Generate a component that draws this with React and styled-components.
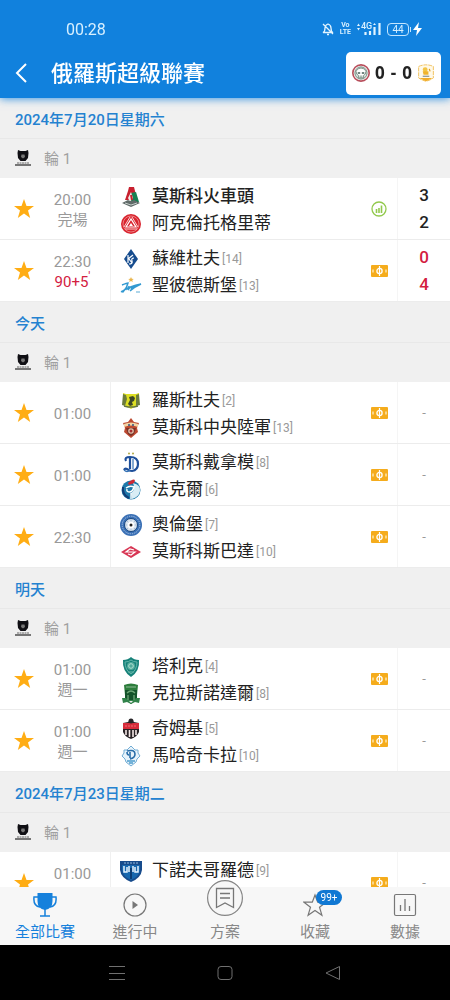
import React from 'react';
import styled, { createGlobalStyle } from 'styled-components';

const sections = [
  {
    title: '2024年7月20日星期六',
    matches: [
      {
        time: '20:00',
        status: '完場',
        home: { name: '莫斯科火車頭', crest: 'lokomotiv', winner: true },
        away: { name: '阿克倫托格里蒂', crest: 'akron' },
        score: [3, 2],
        finished: true,
      },
      {
        time: '22:30',
        minute: '90+5',
        home: { name: '蘇維杜夫', rank: 14, crest: 'krylia' },
        away: { name: '聖彼德斯堡', rank: 13, crest: 'zenit' },
        score: [0, 4],
      },
    ],
  },
  {
    title: '今天',
    matches: [
      {
        time: '01:00',
        home: { name: '羅斯杜夫', rank: 2, crest: 'rostov' },
        away: { name: '莫斯科中央陸軍', rank: 13, crest: 'cska' },
      },
      {
        time: '01:00',
        home: { name: '莫斯科戴拿模', rank: 8, crest: 'dynamo' },
        away: { name: '法克爾', rank: 6, crest: 'fakel' },
      },
      {
        time: '22:30',
        home: { name: '奧倫堡', rank: 7, crest: 'orenburg' },
        away: { name: '莫斯科斯巴達', rank: 10, crest: 'spartak' },
      },
    ],
  },
  {
    title: '明天',
    matches: [
      {
        time: '01:00',
        status: '週一',
        home: { name: '塔利克', rank: 4, crest: 'akhmat' },
        away: { name: '克拉斯諾達爾', rank: 8, crest: 'krasnodar' },
      },
      {
        time: '01:00',
        status: '週一',
        home: { name: '奇姆基', rank: 5, crest: 'khimki' },
        away: { name: '馬哈奇卡拉', rank: 10, crest: 'makhachkala' },
      },
    ],
  },
  {
    title: '2024年7月23日星期二',
    matches: [
      {
        time: '01:00',
        status: '\u00a0',
        home: { name: '下諾夫哥羅德', rank: 9, crest: 'nizhny' },
        away: { name: '', crest: 'rubin' },
      },
    ],
  },
];

const crests = {
  lokomotiv: (
    <>
      <path d="M9 1h5l1 4 2 9H5l3-9z" fill="#c8202f" />
      <path d="M11 7l5-1 3 10-8 3z" fill="#168052" />
      <path d="M8 12l3-6 2 6-3 4z" fill="#f3e8e5" />
      <path d="M11 9l1 5" stroke="#c8202f" strokeWidth="2" />
      <path d="M2 17l6-3q3 2 6 0l6 3-9 4z" fill="#606b69" />
      <path d="M5 17l6 2 6-2" stroke="#c7cecb" fill="none" />
    </>
  ),
  akron: (
    <>
      <circle cx="11" cy="11" r="10" fill="#d9242f" />
      <circle cx="11" cy="11" r="8" fill="none" stroke="#ee7f80" />
      <path d="M10 4L4 14M12 4l6 10M5 16h12" stroke="#f9cfcf" strokeWidth="1" />
      <path d="M11 6l-5 8h10z" fill="none" stroke="#fff" strokeWidth="1.2" />
      <path d="M11 10l-2 3h4z" fill="#fff" />
    </>
  ),
  krylia: (
    <>
      <path d="M11 1l7 10-7 10-7-10z" fill="#164c8e" />
      <path d="M8 7v8M8 11l5-4M9 11l3 4M14 10q-3 0-2 3t-3 3" stroke="#fff" strokeWidth="1.2" fill="none" />
    </>
  ),
  zenit: (
    <>
      <path d="M11 2l.8 1.700 2 .2-1.500 1.200.4 2L11 6.100l-1.700 1 .4-2-1.500-1.200 2-.2z" fill="#e9b44b" />
      <path d="M2 10q5-2 6-2-1 5-5 9l-2-.5M1 17q9-6 20-8-7 3-11 7M7 11l-1 4M9 11l-1 4q3-4 4-3l-1 3q3-4 4-3M14 12l2-2" stroke="#3299d1" strokeWidth="1.400" fill="none" />
      <path d="M16 17h4" stroke="#81bfdf" strokeWidth="1.300" />
    </>
  ),
  rostov: (
    <>
      <path d="M3 3l3 1h10l3-1v11l-3 2-5 3-5-3-3-2z" fill="#dddf22" />
      <path d="M3 4l3 1 1 4-2 7-3-1zM16 5l3-1 1 11-4 1z" fill="#6c7c3c" />
      <path d="M9 7l4-1 2 2-1 3-2 1 1 3-3 1-2-2 2-4z" fill="#3d4726" />
      <path d="M4 16l4 1h6l4-1" stroke="#63743e" strokeWidth="1.300" fill="none" />
    </>
  ),
  cska: (
    <>
      <path d="M11 1l3 4 5 1-2 5 1 4-7 6-7-6 1-4-2-5 5-1z" fill="#bc4a31" />
      <path d="M4 7q7-3 14 0v3q-7-3-14 0z" fill="#f1d4a4" />
      <path d="M6 11h10l-2 6-3 2-3-2z" fill="#7a3328" />
      <circle cx="11" cy="14" r="2.800" fill="#dfc4ab" />
      <circle cx="11" cy="14" r="1.500" fill="#a82d30" />
      <path d="M8 8h2M12 8h2" stroke="#315381" strokeWidth="1.400" />
    </>
  ),
  dynamo: (
    <>
      <circle cx="9" cy="1.500" r="1" fill="#b1a944" />
      <circle cx="13" cy="1.500" r="1" fill="#b1a944" />
      <path d="M6 9q-2-4 4-4 8 0 8 7 0 6-6 7-3 0-5-2-2-1-3 1M10 6v11" fill="none" stroke="#1e4f9a" strokeWidth="2.200" />
      <path d="M13 7v10M4 18q3 3 6 0" stroke="#3572b5" strokeWidth="1.200" fill="none" />
    </>
  ),
  fakel: (
    <>
      <circle cx="11" cy="11" r="9.500" fill="#1d79aa" />
      <path d="M13 4q8 2 7 8-1 6-8 8l-1-6q5-3 2-10z" fill="#d9edf5" />
      <path d="M8 4q5-5 7-3l-1 3-5 2z" fill="#cf2834" />
      <path d="M6 9q4-3 8-1-1 4-4 5-4 0-3-3M11 14v6" stroke="#fff" strokeWidth="1.400" fill="none" />
      <path d="M3 8q-1 8 6 11" stroke="#113e77" strokeWidth="2" fill="none" />
    </>
  ),
  orenburg: (
    <>
      <circle cx="11" cy="11" r="11" fill="#3a70b5" />
      <circle cx="11" cy="11" r="8.800" fill="none" stroke="#a9c3e4" strokeDasharray="1.300 1" />
      <circle cx="11" cy="11" r="6.500" fill="#dce6f0" stroke="#16457e" />
      <path d="M11 5v12M5 11h12M7 7l8 8M15 7l-8 8" stroke="#a9bfd8" />
      <circle cx="11" cy="11" r="3.500" fill="#fff" />
      <circle cx="11" cy="11" r="1.500" fill="#222" />
    </>
  ),
  spartak: (
    <>
      <path d="M1 11l10-6 10 6-10 6z" fill="#d83654" />
      <path d="M14 9l-4-1-4 3h9l-4 3-3-1" fill="none" stroke="#fff" strokeWidth="1.200" />
    </>
  ),
  akhmat: (
    <>
      <path d="M3 4q5 0 8-3 3 3 8 3 1 11-8 17Q2 15 3 4z" fill="#168179" />
      <path d="M5 6q4 0 6-2 2 2 6 2 0 8-6 12Q5 14 5 6z" fill="none" stroke="#63b6a9" />
      <circle cx="11" cy="10" r="4" fill="#51aa9b" />
      <circle cx="11" cy="10" r="2.300" fill="none" stroke="#b0dfd1" />
      <path d="M8 16h6" stroke="#6bb7aa" />
    </>
  ),
  krasnodar: (
    <>
      <path d="M4 2q7-3 14 0l-1 10H5z" fill="#2d7d3c" />
      <path d="M5 7h12v9l-6 5-6-5z" fill="#14532b" />
      <path d="M2 15h4l2 2h6l2-2h4l-1 5-4-1-4 2-4-2-4 1z" fill="#31834a" />
      <path d="M7 10q4-4 8 0M8 12v5M14 12v5M6 4h10" stroke="#6fa778" strokeWidth="1.300" fill="none" />
      <path d="M9 18l2 2 2-2z" fill="#eee" />
    </>
  ),
  khimki: (
    <>
      <path d="M3 5l5-1 3-3 3 3 5 1v9q-2 5-8 7-6-2-8-7z" fill="#292326" />
      <path d="M3 5h16v6H3z" fill="#d72c3b" />
      <path d="M5 8h12" stroke="#f06e73" strokeDasharray="2 1" />
      <path d="M6 12v5M9.500 12v7M13 12v7M16 12v5" stroke="#f5e9e8" strokeWidth="1.600" />
      <circle cx="11" cy="3" r="2.500" fill="#282528" />
    </>
  ),
  makhachkala: (
    <>
      <path d="M11 1l4 4h3v3l2 3-3 3-1 3-5 4-5-4-1-3-3-3 2-3V5h3z" fill="#e7f3fb" stroke="#72add5" />
      <path d="M7 6q8-2 8 3 0 4-5 5M10 7v6M7 7q0 3 2 3" fill="none" stroke="#286da9" strokeWidth="1.600" />
      <path d="M7 16h8M9 18h4" stroke="#4e9dcd" strokeWidth="1.600" />
    </>
  ),
  nizhny: (
    <>
      <path d="M0 1h22v9q-1 8-11 12Q1 18 0 10z" fill="#174b8c" />
      <path d="M2 5h18v5q-1 7-9 10-8-3-9-10z" fill="#1767ae" />
      <path d="M4 6v6h3V7M9 6v6M13 6v6M15 7v5h3V6" fill="none" stroke="#e6f3ff" strokeWidth="1.500" />
      <path d="M4 3h14" stroke="#91b8da" strokeDasharray="2 1" />
      <path d="M11 8v11" stroke="#082e61" strokeWidth="1.500" />
    </>
  ),
  rubin: (
    <>
      <path d="M1 0h20v1H1z" fill="#8b6a70" />
      <path d="M2 2h18l-3 13-6 6-6-6z" fill="#8c1d34" />
    </>
  ),
  bull: (
    <>
      <circle cx="11" cy="11" r="10" fill="#fff" stroke="#b84f5c" strokeWidth="2" />
      <circle cx="11" cy="11" r="7.500" fill="#d5e0d9" stroke="#59756a" />
      <path d="M5 9q1-4 6-4t6 4q0 4-3 5v3H8v-3q-3-1-3-5z" fill="#fff" stroke="#6d877c" />
      <path d="M7 10h3v2H7zM12 10h3v2h-3z" fill="#435e57" />
      <path d="M10 14v3M12 14v3" stroke="#6d877c" />
    </>
  ),
  gold: (
    <>
      <path d="M2 3q9-4 18 0v14q-4 3-9 4-5-1-9-4z" fill="#fff9e8" stroke="#eeb743" strokeDasharray="5 1" />
      <circle cx="10" cy="7" r="3" fill="#f2c443" />
      <path d="M7 9h7v4H8z" fill="#f0b32c" />
      <path d="M15 6l1 3" stroke="#df9f23" strokeWidth="1.500" />
      <path d="M7 15h8" stroke="#8d918c" strokeWidth="1.500" />
      <path d="M3 17h16l-8 4z" fill="#f2ac27" />
    </>
  ),
};

const Crest = ({ name, size = 22 }) => (
  <Svg width={size} height={size} viewBox="0 0 22 22" aria-hidden="true">
    {crests[name]}
  </Svg>
);

const StarIcon = () => (
  <Svg width="20" height="20" viewBox="0 0 20 20" aria-hidden="true">
    <path d="M10 0l2.500 7H20l-6 4.500 2.200 7.500L10 14.600 3.800 19 6 11.500 0 7h7.500z" fill="#ffad14" />
  </Svg>
);

const PitchIcon = () => (
  <Svg width="17" height="12" viewBox="0 0 17 12" aria-hidden="true">
    <rect width="17" height="12" rx="1" fill="#f5ac1c" />
    <circle cx="8.500" cy="6" r="2.600" fill="none" stroke="#fff" strokeWidth="1.300" />
    <path d="M8.500 1v10" stroke="#fff" strokeWidth="1.200" />
    <path d="M2 4.500v3M15 4.500v3" stroke="#fff3d2" strokeWidth="1.200" />
  </Svg>
);

const StatsIcon = () => (
  <Svg width="16" height="16" viewBox="0 0 16 16" aria-hidden="true">
    <circle cx="8" cy="8" r="7" fill="none" stroke="#92c94d" strokeWidth="1.300" />
    <path d="M5.500 8v4M8 7v5M10.500 4.500V12" stroke="#92c94d" strokeWidth="1.600" />
  </Svg>
);

const LeagueLogo = () => (
  <Svg width="16" height="18" viewBox="0 0 16 18" aria-hidden="true">
    <path d="M3 1l2.500 1h5L13 1l.5 3-.5 5-2.500 3h-5L3 9l-.5-5z" fill="#100f14" />
    <path d="M6.500 5.500h3L10 8 8 9.500 6 8z" fill="#777" />
    <path d="M2 14h12" stroke="#666" strokeWidth="1.200" strokeDasharray="2 .5" />
    <path d="M0 16h16" stroke="#333" strokeWidth="1.300" />
  </Svg>
);

const TrophyIcon = () => (
  <Svg width="24" height="24" viewBox="0 0 24 24" aria-hidden="true">
    <path d="M4.500 0h15v8q0 8-7.500 9-7.500-1-7.500-9z" fill="#1681dc" />
    <path d="M5 4H1q-1 9 6 10M19 4h4q1 9-6 10M12 16v7M7 23h10" fill="none" stroke="#1681dc" strokeWidth="1.500" />
  </Svg>
);

const PlayIcon = () => (
  <Svg width="24" height="24" viewBox="0 0 24 24" aria-hidden="true">
    <circle cx="12" cy="12" r="11" fill="none" stroke="#777" strokeWidth="1.200" />
    <path d="M9.500 8l5.500 4-5.500 4z" fill="#777" />
  </Svg>
);

const PlanIcon = () => (
  <Svg width="36" height="36" viewBox="0 0 36 36" aria-hidden="true">
    <circle cx="18" cy="18" r="17.400" fill="#f7f7f7" stroke="#858585" strokeWidth="1.200" />
    <path d="M9.500 8.500h17v19L18 23l-8.500 4.500z" fill="none" stroke="#777" strokeWidth="1.300" />
    <path d="M13 13.500h10M13 18h10" stroke="#777" strokeWidth="1.300" />
  </Svg>
);

const FavoriteIcon = () => (
  <Svg width="24" height="24" viewBox="0 0 24 24" aria-hidden="true">
    <path d="M12 2l2.700 7.200H23l-6.500 5 2.400 8L12 17.500l-6.900 4.700 2.400-8L1 9.200h8.300z" fill="none" stroke="#777" strokeWidth="1.200" />
  </Svg>
);

const DataIcon = () => (
  <Svg width="24" height="24" viewBox="0 0 24 24" aria-hidden="true">
    <rect x="1.500" y="1.500" width="21" height="21" rx="1.500" fill="none" stroke="#777" strokeWidth="1.200" />
    <path d="M7.500 12v6M12 6v12M16.500 13v5" stroke="#777" strokeWidth="1.300" />
  </Svg>
);

const tabs = [
  { label: '全部比賽', Icon: TrophyIcon, active: true },
  { label: '進行中', Icon: PlayIcon },
  { label: '方案', Icon: PlanIcon, raised: true },
  { label: '收藏', Icon: FavoriteIcon, badge: '99+' },
  { label: '數據', Icon: DataIcon },
];

const StatusBar = () => (
  <Status>
    <span>00:28</span>
    <StatusIcons>
      <Svg width="12" height="14" viewBox="0 0 12 14" aria-hidden="true">
        <path d="M1 10.500q2-1 2-4.500 0-3 3-4 3 1 3 4 0 3.500 2 4.500zM5 12.500h2M1 2l10 10" fill="none" stroke="#e2f4ff" strokeWidth="1.300" />
      </Svg>
      <Volte>
        <span>Vo</span>
        <span>LTE</span>
      </Volte>
      <Signal>
        <Svg width="24" height="14" viewBox="0 0 24 14" aria-hidden="true">
          <path d="M0 4l1.500-2.500L3 4zM0 6l1.500 2.500L3 6zM16 3l1.500-2L19 3z" fill="#e2f4ff" />
          <path d="M8.500 10v3M13 9v4M17.500 5v8M22.500 1v12" stroke="#e2f4ff" strokeWidth="2.200" />
        </Svg>
        <Network>4G</Network>
      </Signal>
      <Power>
        <Battery>44</Battery>
        <BatteryTip />
        <Svg width="9" height="14" viewBox="0 0 9 14" aria-hidden="true">
          <path d="M6 0L0 8h4l-1 6 6-8H5z" fill="#fff" />
        </Svg>
      </Power>
    </StatusIcons>
  </Status>
);

const Team = ({ team }) => (
  <TeamLine>
    <Crest name={team.crest} />
    <TeamName $winner={team.winner}>{team.name}</TeamName>
    {team.rank && <Rank>[{team.rank}]</Rank>}
  </TeamLine>
);

const Match = ({ match }) => (
  <MatchRow>
    <StarButton type="button" aria-label="收藏">
      <StarIcon />
    </StarButton>
    <Kickoff>
      <span>{match.time}</span>
      {match.status && <span>{match.status}</span>}
      {match.minute && (
        <Minute>
          {match.minute}
          <Tick>'</Tick>
        </Minute>
      )}
    </Kickoff>
    <Teams>
      <Team team={match.home} />
      <Team team={match.away} />
    </Teams>
    <Feature>{match.finished ? <StatsIcon /> : <PitchIcon />}</Feature>
    <Score $live={!!match.minute}>
      {match.score ? match.score.map((goals, i) => <span key={i}>{goals}</span>) : <Dash>-</Dash>}
    </Score>
  </MatchRow>
);

const App = () => (
  <Screen lang="zh-Hant">
    <GlobalStyle />
    <Header>
      <StatusBar />
      <TitleBar>
        <BackButton type="button" aria-label="返回">
          <Svg width="12" height="20" viewBox="0 0 12 20" aria-hidden="true">
            <path d="M11 1L2 10l9 9" fill="none" stroke="#fff" strokeWidth="2" />
          </Svg>
        </BackButton>
        <Title>俄羅斯超級聯賽</Title>
        <LiveCard type="button">
          <Crest name="bull" size={18} />
          <LiveScore>
            <span>0</span>
            <span>-</span>
            <span>0</span>
          </LiveScore>
          <Crest name="gold" size={18} />
        </LiveCard>
      </TitleBar>
    </Header>
    <List>
      {sections.map((section) => (
        <section key={section.title}>
          <DateTitle>{section.title}</DateTitle>
          <Round>
            <LeagueLogo />
            <span>輪 1</span>
          </Round>
          {section.matches.map((match) => (
            <Match key={match.home.name} match={match} />
          ))}
        </section>
      ))}
    </List>
    <TabBar>
      {tabs.map(({ label, Icon, active, raised, badge }) => (
        <Tab key={label} type="button" $active={active}>
          <TabIcon $raised={raised}>
            <Icon />
            {badge && <Badge>{badge}</Badge>}
          </TabIcon>
          <span>{label}</span>
        </Tab>
      ))}
    </TabBar>
    <SystemNav>
      <SystemButton type="button" aria-label="選單">
        <Svg width="16" height="16" viewBox="0 0 16 16" aria-hidden="true">
          <path d="M0 1.500h16M0 8.500h16M0 14.500h16" stroke="#707070" />
        </Svg>
      </SystemButton>
      <SystemButton type="button" aria-label="主畫面">
        <Svg width="16" height="16" viewBox="0 0 16 16" aria-hidden="true">
          <rect x="1" y="1.500" width="14" height="13" rx="3" fill="none" stroke="#707070" />
        </Svg>
      </SystemButton>
      <SystemButton type="button" aria-label="返回上一頁">
        <Svg width="16" height="16" viewBox="0 0 16 16" aria-hidden="true">
          <path d="M14.500 1.500v13L1 8z" fill="none" stroke="#707070" strokeLinejoin="round" />
        </Svg>
      </SystemButton>
    </SystemNav>
  </Screen>
);

export default App;

const GlobalStyle = createGlobalStyle`
  * {
    box-sizing: border-box;
  }
  body {
    margin: 0;
    background: #000;
    font-family: Roboto, 'Noto Sans CJK TC', sans-serif;
    font-size: 15px;
  }
  button {
    padding: 0;
    border: 0;
    background: none;
    color: inherit;
    font: inherit;
    cursor: pointer;
  }
`;
const Svg = styled.svg`
  display: block;
  flex: none;
`;
const Screen = styled.div`
  height: 100vh;
  display: flex;
  flex-direction: column;
`;
const Header = styled.header`
  position: relative;
  z-index: 1;
  background: #1181dd;
  color: #fff;
  box-shadow: 0 1px 8px rgba(17, 129, 221, 0.8);
`;
const Status = styled.div`
  height: 48px;
  padding: 10px 28px 0 66px;
  display: flex;
  align-items: center;
  justify-content: space-between;
  color: #d8f0ff;
  font-size: 16px;
`;
const StatusIcons = styled.div`
  display: flex;
  align-items: center;
  gap: 6px;
`;
const Volte = styled.span`
  display: flex;
  flex-direction: column;
  align-items: center;
  font-size: 7px;
  font-weight: 700;
  line-height: 7px;
`;
const Signal = styled.span`
  position: relative;
`;
const Network = styled.span`
  position: absolute;
  top: 0;
  left: 4px;
  font-size: 9px;
  font-weight: 500;
  line-height: 8px;
`;
const Power = styled.span`
  display: flex;
  align-items: center;
`;
const Battery = styled.span`
  width: 22px;
  height: 13px;
  border: 1px solid #c3e6ff;
  border-radius: 4px;
  font-size: 10px;
  line-height: 12px;
  text-align: center;
`;
const BatteryTip = styled.span`
  width: 1px;
  height: 5px;
  margin: 0 2px 0 1px;
  background: #c3e6ff;
`;
const TitleBar = styled.div`
  height: 50px;
  padding-right: 9px;
  display: flex;
  align-items: center;
`;
const BackButton = styled.button`
  && {
    width: 51px;
    height: 50px;
    padding-left: 15px;
  }
`;
const Title = styled.h1`
  flex: 1;
  margin: 0;
  padding-top: 1px;
  font-size: 22px;
  font-weight: 500;
  line-height: 30px;
`;
const LiveCard = styled.button`
  && {
    height: 43px;
    padding: 0 6px;
    display: flex;
    align-items: center;
    gap: 5px;
    border-radius: 5px;
    background: #fff;
    color: #222;
  }
`;
const LiveScore = styled.span`
  display: flex;
  gap: 6px;
  font-family: 'Noto Sans', sans-serif;
  font-size: 17px;
  font-weight: 700;
  line-height: 24px;
`;
const List = styled.main`
  flex: 1;
  min-height: 0;
  overflow-y: auto;
  scrollbar-width: none;
  background: #f0f0f0;
`;
const DateTitle = styled.h2`
  height: 41px;
  margin: 0;
  padding-left: 15px;
  border-bottom: 1px solid #e8e8e8;
  color: #2482d0;
  font-size: 15px;
  font-weight: 500;
  line-height: 44px;
`;
const Round = styled.div`
  height: 39px;
  padding: 0 0 2px 15px;
  display: flex;
  align-items: center;
  gap: 13px;
  color: #a0a0a0;
`;
const MatchRow = styled.article`
  height: 62px;
  display: grid;
  grid-template-columns: 48px 49px 1fr 36px 53px;
  border-bottom: 1px solid #ececec;
  background: #fff;
`;
const StarButton = styled.button`
  display: flex;
  align-items: center;
  justify-content: center;
`;
const Kickoff = styled.div`
  padding-top: 2px;
  display: flex;
  flex-direction: column;
  align-items: center;
  justify-content: center;
  color: #999;
  line-height: 20px;
`;
const Minute = styled.span`
  color: #d3203f;
`;
const Tick = styled.sup`
  font-size: 12px;
  line-height: 0;
`;
const Teams = styled.div`
  margin-left: 13px;
  padding: 5px 0 2px 9px;
  border-left: 1px solid #f0f0f0;
`;
const TeamLine = styled.div`
  height: 27px;
  display: flex;
  align-items: center;
`;
const TeamName = styled.span`
  margin: 0 2px 0 10px;
  color: #222;
  font-size: 17px;
  font-weight: ${({ $winner }) => ($winner ? 500 : 400)};
  line-height: 27px;
`;
const Rank = styled.span`
  color: #999;
  font-size: 12px;
`;
const Feature = styled.div`
  padding-top: 1px;
  display: flex;
  align-items: center;
  justify-content: center;
`;
const Score = styled.div`
  padding-top: 1px;
  display: flex;
  flex-direction: column;
  align-items: center;
  justify-content: center;
  border-left: 1px solid #f5f5f5;
  color: ${({ $live }) => ($live ? '#d3203f' : '#222')};
  font-size: 17px;
  font-weight: 500;
  line-height: 27px;
`;
const Dash = styled.span`
  color: #999;
  font-size: 13px;
  font-weight: 400;
  line-height: 16px;
`;
const TabBar = styled.nav`
  position: relative;
  height: 58px;
  display: flex;
  background: #f7f7f7;
`;
const Tab = styled.button`
  && {
    flex: 1;
    display: flex;
    flex-direction: column;
    align-items: center;
    justify-content: flex-end;
    padding-bottom: 3px;
    color: ${({ $active }) => ($active ? '#1681dc' : '#888')};
    line-height: 20px;
  }
`;
const TabIcon = styled.span`
  position: relative;
  margin-bottom: ${({ $raised }) => ($raised ? '6px' : '5px')};
`;
const Badge = styled.span`
  position: absolute;
  top: -3px;
  left: 13px;
  width: 26px;
  border-radius: 8px;
  background: #1078d3;
  color: #fff;
  font-size: 10px;
  line-height: 15px;
  text-align: center;
`;
const SystemNav = styled.nav`
  height: 55px;
  display: flex;
  align-items: center;
  justify-content: center;
  gap: 92px;
  background: #000;
`;
const SystemButton = styled.button`
  width: 16px;
  height: 16px;
`;
